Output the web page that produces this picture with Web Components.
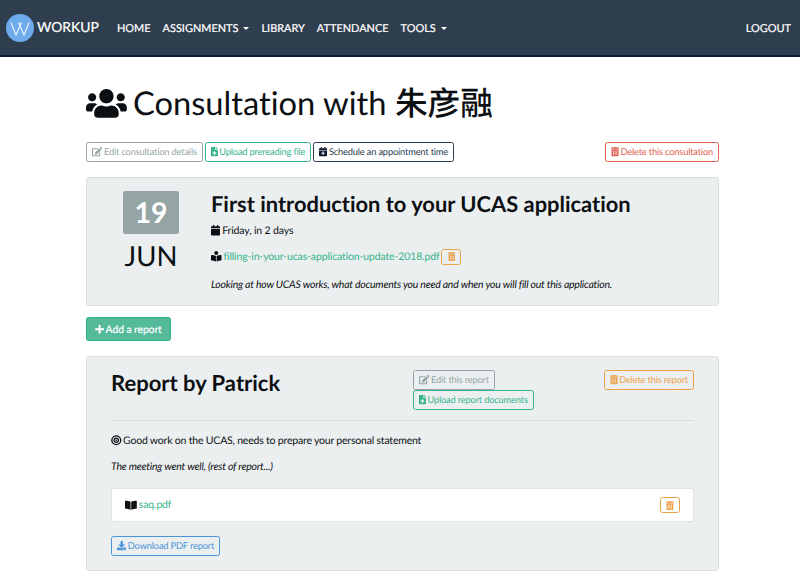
<!DOCTYPE html>
<html lang="en">
<head>
<meta charset="utf-8">
<title>Workup</title>
<style>
body{margin:0;background:#fff;color:#0d1013;font-family:Lato,"Noto Sans CJK SC",sans-serif;font-size:10.5px;line-height:15px;text-rendering:geometricPrecision;font-variant-ligatures:none}
</style>
</head>
<body>
<app-page></app-page>
<script>
const ICONS={
users:[640,'M96 224c35.3 0 64-28.7 64-64s-28.7-64-64-64-64 28.7-64 64 28.7 64 64 64zm448 0c35.3 0 64-28.7 64-64s-28.7-64-64-64-64 28.7-64 64 28.7 64 64 64zm32 32h-64c-17.6 0-33.5 7.1-45.1 18.6 40.3 22.1 68.9 62 75.1 109.4h66c17.7 0 32-14.3 32-32v-32c0-35.3-28.7-64-64-64zm-256 0c61.9 0 112-50.1 112-112S381.9 32 320 32 208 82.1 208 144s50.1 112 112 112zm76.8 32h-8.3c-20.8 10-43.9 16-68.5 16s-47.6-6-68.5-16h-8.3C179.6 288 128 339.6 128 403.2V432c0 26.5 21.5 48 48 48h288c26.5 0 48-21.5 48-48v-28.8c0-63.6-51.6-115.2-115.2-115.2zm-223.7-13.4C161.5 263.1 145.6 256 128 256H64c-35.3 0-64 28.7-64 64v32c0 17.7 14.3 32 32 32h65.9c6.3-47.4 34.9-87.3 75.2-109.4z'],
edit:[576,'M402.6 83.2l90.2 90.2c3.8 3.8 3.8 10 0 13.8L274.4 405.6l-92.8 10.3c-12.4 1.4-22.9-9.1-21.5-21.5l10.3-92.8L388.8 83.2c3.8-3.8 10-3.8 13.8 0zm162-22.9l-48.8-48.8c-15.2-15.2-39.9-15.2-55.2 0l-35.4 35.4c-3.8 3.8-3.8 10 0 13.8l90.2 90.2c3.8 3.8 10 3.8 13.8 0l35.4-35.4c15.2-15.3 15.2-40 0-55.2zM384 346.2V448H64V128h229.8c3.2 0 6.2-1.3 8.5-3.5l40-40c7.6-7.6 2.2-20.5-8.5-20.5H48C21.5 64 0 85.5 0 112v352c0 26.5 21.5 48 48 48h352c26.5 0 48-21.5 48-48V306.2c0-10.7-12.9-16-20.5-8.5l-40 40c-2.2 2.3-3.5 5.3-3.5 8.5z'],
upload:[384,'M224 136V0H24C10.7 0 0 10.7 0 24v464c0 13.3 10.7 24 24 24h336c13.3 0 24-10.7 24-24V160H248c-13.2 0-24-10.8-24-24zm65.18 216.01H224v80c0 8.84-7.16 16-16 16h-32c-8.84 0-16-7.16-16-16v-80H94.82c-14.28 0-21.41-17.29-11.27-27.36l96.42-95.7c6.65-6.61 17.39-6.61 24.04 0l96.42 95.7c10.15 10.07 3.03 27.36-11.25 27.36zM377 105L279.1 7c-4.5-4.5-10.6-7-17-7H256v128h128v-6.1c0-6.3-2.5-12.4-7-16.9z'],
trash:[448,'M32 464a48 48 0 0 0 48 48h288a48 48 0 0 0 48-48V128H32zm272-256a16 16 0 0 1 32 0v224a16 16 0 0 1-32 0zm-96 0a16 16 0 0 1 32 0v224a16 16 0 0 1-32 0zm-96 0a16 16 0 0 1 32 0v224a16 16 0 0 1-32 0zM432 32H312l-9.4-18.7A24 24 0 0 0 281.1 0H166.8a23.72 23.72 0 0 0-21.4 13.3L136 32H16A16 16 0 0 0 0 48v32a16 16 0 0 0 16 16h416a16 16 0 0 0 16-16V48a16 16 0 0 0-16-16z'],
calendar:[448,'M12 192h424c6.6 0 12 5.4 12 12v260c0 26.5-21.5 48-48 48H48c-26.5 0-48-21.5-48-48V204c0-6.6 5.4-12 12-12zm436-44v-36c0-26.5-21.5-48-48-48h-48V12c0-6.6-5.4-12-12-12h-40c-6.6 0-12 5.4-12 12v52H160V12c0-6.6-5.4-12-12-12h-40c-6.6 0-12 5.4-12 12v52H48C21.5 64 0 85.5 0 112v36c0 6.6 5.4 12 12 12h424c6.6 0 12-5.4 12-12z'],
reader:[512,'M352 96c0-53.02-42.98-96-96-96s-96 42.98-96 96 42.98 96 96 96 96-42.98 96-96zM233.59 241.1c-59.33-36.32-155.43-46.3-203.79-49.05C13.55 191.13 0 203.51 0 219.14v222.8c0 14.33 11.59 26.28 26.49 27.05 43.66 2.29 131.99 10.68 193.04 41.43 9.37 4.72 20.48-1.71 20.48-11.87V252.56c-.01-4.67-2.32-8.95-6.42-11.46zm248.61-49.05c-48.35 2.74-144.46 12.73-203.78 49.05-4.1 2.51-6.41 6.96-6.41 11.63v245.79c0 10.19 11.14 16.63 20.54 11.9 61.04-30.72 149.32-39.11 192.97-41.4 14.9-.78 26.49-12.73 26.49-27.06V219.14c-.01-15.63-13.56-28.01-29.81-27.09z'],
book:[576,'M542.22 32.05c-54.8 3.11-163.72 14.43-230.96 55.59-4.64 2.84-7.27 7.89-7.27 13.17v363.87c0 11.55 12.63 18.85 23.28 13.49 69.18-34.82 169.23-44.32 218.7-46.92 16.89-.89 30.02-14.43 30.02-30.66V62.75c.01-17.71-15.35-31.74-33.77-30.7zM264.73 87.64C197.5 46.48 88.58 35.17 33.78 32.05 15.36 31.01 0 45.04 0 62.75V400.6c0 16.24 13.13 29.78 30.02 30.66 49.49 2.6 149.59 12.11 218.77 46.95 10.62 5.35 23.21-1.94 23.21-13.46V100.63c0-5.29-2.62-10.14-7.27-12.99z'],
target:[512,'M256 8a248 248 0 1 0 0 496a248 248 0 1 0 0-496zM256 72a184 184 0 1 1 0 368a184 184 0 1 1 0-368zM256 120a136 136 0 1 0 0 272a136 136 0 1 0 0-272zM256 180a76 76 0 1 1 0 152a76 76 0 1 1 0-152zM256 216a40 40 0 1 0 0 80a40 40 0 1 0 0-80z'],
plus:[448,'M416 208H272V64c0-17.67-14.33-32-32-32h-32c-17.67 0-32 14.33-32 32v144H32c-17.67 0-32 14.33-32 32v32c0 17.67 14.33 32 32 32h144v144c0 17.67 14.33 32 32 32h32c17.67 0 32-14.33 32-32V304h144c17.67 0 32-14.33 32-32v-32c0-17.67-14.33-32-32-32z'],
download:[512,'M216 0h80c13.3 0 24 10.7 24 24v168h87.7c17.8 0 26.7 21.5 14.1 34.1L269.7 378.3c-7.5 7.5-19.8 7.5-27.3 0L90.1 226.1c-12.6-12.6-3.7-34.1 14.1-34.1H192V24c0-13.3 10.7-24 24-24zm296 376v112c0 13.3-10.7 24-24 24H24c-13.3 0-24-10.7-24-24V376c0-13.3 10.7-24 24-24h146.7l49 49c20.1 20.1 52.5 20.1 72.6 0l49-49H488c13.3 0 24 10.7 24 24zm-124 88c0-11-9-20-20-20s-20 9-20 20 9 20 20 20 20-9 20-20zm64 0c0-11-9-20-20-20s-20 9-20 20 9 20 20 20 20-9 20-20z']};
ICONS.schedule=[448,ICONS.calendar[1]+'M196 250h56v60h60v56h-60v60h-56v-60h-60v-56h60z'];

const define=(name,html)=>{
  const t=document.createElement('template');t.innerHTML=html;
  customElements.define(name,class extends HTMLElement{
    constructor(){super();this.attachShadow({mode:'open'}).append(t.content.cloneNode(true));}
  });
};

customElements.define('fa-icon',class extends HTMLElement{
  connectedCallback(){
    const [w,d]=ICONS[this.getAttribute('name')];
    (this.shadowRoot||this.attachShadow({mode:'open'})).innerHTML=
    `<style>:host{display:inline-block;flex:none;height:1em;width:${w/512}em;vertical-align:-.125em}svg{display:block;width:100%;height:100%}</style><svg viewBox="0 0 ${w} 512"><path fill="currentColor" fill-rule="evenodd" d="${d}"/></svg>`;
  }
});

define('app-button',`<style>
:host{display:inline-flex;align-items:center;box-sizing:border-box;flex:none;height:20px;padding:0 5px;gap:1.5px;border:1px solid;border-radius:2.5px;font-size:9.3px;letter-spacing:-.18px;line-height:18px;white-space:nowrap}
:host([kind=muted]){color:#95a5a6}
:host([kind=green]){color:#37b48c}
:host([kind=dark]){color:#2c3e50}
:host([kind=dark]) ::slotted(fa-icon){color:#0d1b33}
:host([kind=red]){color:#e2604f}
:host([kind=orange]){color:#eba24b}
:host([kind=blue]){color:#4b93d8}
:host([kind=solid]){color:#fff;background:#55ba9a;border-color:#2fb38a;height:24px;padding:1px 8px 0;font-size:10.4px;letter-spacing:-.1px;-webkit-text-stroke:.2px}
:host([small]){width:20px;height:16px;padding:0;justify-content:center;font-size:9px}
</style><slot name="icon"></slot><slot></slot>`);

define('app-card',`<style>
:host{display:block;box-sizing:border-box;background:#ebeff0;border:1px solid #dbdfe1;border-radius:3px}
</style><slot></slot>`);

define('nav-item',`<style>
:host{display:flex;align-items:center;gap:5px;white-space:nowrap}
i{display:none;border:3.5px solid transparent;border-top-color:currentColor;border-bottom:0}
:host([menu]) i{display:block}
</style><slot></slot><i></i>`);

define('nav-bar',`<style>
:host{display:flex;align-items:center;box-sizing:border-box;height:57px;padding:1px 9px 0 6px;background:#2f3e4e;border-bottom:2px solid #0d1b33;color:#fff;font-size:10.95px;-webkit-text-stroke:.2px}
svg{width:28px;height:28px;display:block;flex:none}
.brand{font-size:13.9px;width:80px;padding-left:3px;white-space:nowrap;margin-bottom:3px}
nav{display:flex;gap:12px;flex:1}
</style>
<svg viewBox="0 0 28 28"><circle cx="14" cy="14" r="14" fill="#6dabec"/><path d="M5 8.5L10 21L15.5 8.5M12.5 8.5L18 21L23 8.5" fill="none" stroke="#eef5fc" stroke-width="1.1"/></svg>
<span class="brand">WORKUP</span>
<nav><nav-item>HOME</nav-item><nav-item menu>ASSIGNMENTS</nav-item><nav-item>LIBRARY</nav-item><nav-item>ATTENDANCE</nav-item><nav-item menu>TOOLS</nav-item></nav>
<nav-item>LOGOUT</nav-item>`);

define('date-tile',`<style>
:host{display:flex;flex-direction:column;align-items:center;width:56px;text-align:center}
b{width:56px;height:43px;border-radius:2.5px;background:#95a5a6;color:#fff;font-size:28.5px;line-height:44px;font-weight:700}
span{font-size:27.5px;line-height:33px;margin-top:5px}
</style><b><slot name="day"></slot></b><span><slot></slot></span>`);

define('consultation-card',`<style>
:host{display:block}
app-card{display:flex;gap:32px;height:129px;padding:13px 24px 0 36px}
h2{margin:0;font-size:21.9px;line-height:26px;font-weight:700;white-space:nowrap}
div{display:flex;flex-direction:column}
p{margin:0;display:flex;align-items:center;gap:2px;height:15px;line-height:16px;letter-spacing:-.14px;white-space:nowrap}
em{letter-spacing:-.235px}
a{color:#37b48c}
</style>
<app-card><date-tile><span slot="day">19</span>JUN</date-tile>
<div><h2>First introduction to your UCAS application</h2>
<p style="margin-top:6px"><fa-icon name="calendar"></fa-icon><span>Friday, in 2 days</span></p>
<p style="margin-top:11px"><fa-icon name="reader"></fa-icon><a>filling-in-your-ucas-application-update-2018.pdf</a><app-button kind="orange" small><fa-icon slot="icon" name="trash"></fa-icon></app-button></p>
<p style="margin-top:13px"><em>Looking at how UCAS works, what documents you need and when you will fill out this application.</em></p></div></app-card>`);

define('report-card',`<style>
:host{display:block}
app-card{height:215px;padding:13px 24px 0}
header{display:grid;grid-template-columns:302px 1fr auto;height:50px;border-bottom:1px solid #d9dddf}
h2{margin:0;font-size:22px;line-height:26px;font-weight:700}
.acts{display:flex;flex-direction:column;align-items:flex-start}
p{margin:0;display:flex;align-items:center;gap:1.5px;height:15px;line-height:16px;letter-spacing:-.2px;white-space:nowrap}
em{letter-spacing:-.235px}
.file{display:flex;align-items:center;gap:2px;box-sizing:border-box;height:34px;margin:14px 0;padding:0 13px;background:#fff;border:1px solid #dfe3e4;border-radius:3px}
.file a{color:#37b48c;flex:1;letter-spacing:-.14px}
</style>
<app-card><header><h2>Report by Patrick</h2>
<div class="acts"><app-button kind="muted"><fa-icon slot="icon" name="edit"></fa-icon><span>Edit this report</span></app-button><app-button kind="green"><fa-icon slot="icon" name="upload"></fa-icon><span>Upload report documents</span></app-button></div>
<app-button kind="orange"><fa-icon slot="icon" name="trash"></fa-icon><span>Delete this report</span></app-button></header>
<p style="margin-top:12px"><fa-icon name="target"></fa-icon><span>Good work on the UCAS, needs to prepare your personal statement</span></p>
<p style="margin-top:11px"><em>The meeting went well, (rest of report...)</em></p>
<div class="file"><fa-icon name="book"></fa-icon><a>saq.pdf</a><app-button kind="orange" small><fa-icon slot="icon" name="trash"></fa-icon></app-button></div>
<app-button kind="blue"><fa-icon slot="icon" name="download"></fa-icon><span>Download PDF report</span></app-button></app-card>`);

define('app-page',`<style>
:host{display:block}
main{width:633px;margin:26px 0 0 86px}
h1{display:flex;align-items:center;gap:6px;margin:0;height:40px;font-size:32.7px;line-height:40px;font-weight:400;white-space:nowrap}
h1 span span{font-weight:500}
.bar{display:flex;gap:2px;margin:19px 0 15px}
.bar :last-child{margin-left:auto}
.add{display:flex;margin:11px 0 15px}
</style>
<nav-bar></nav-bar>
<main><h1><fa-icon name="users"></fa-icon><span>Consultation with <span>朱彦融</span></span></h1>
<div class="bar"><app-button kind="muted"><fa-icon slot="icon" name="edit"></fa-icon><span>Edit consultation details</span></app-button><app-button kind="green"><fa-icon slot="icon" name="upload"></fa-icon><span>Upload prereading file</span></app-button><app-button kind="dark"><fa-icon slot="icon" name="schedule"></fa-icon><span>Schedule an appointment time</span></app-button><app-button kind="red"><fa-icon slot="icon" name="trash"></fa-icon><span>Delete this consultation</span></app-button></div>
<consultation-card></consultation-card>
<div class="add"><app-button kind="solid"><fa-icon slot="icon" name="plus"></fa-icon><span>Add a report</span></app-button></div>
<report-card></report-card></main>`);
</script>
</body>
</html>
